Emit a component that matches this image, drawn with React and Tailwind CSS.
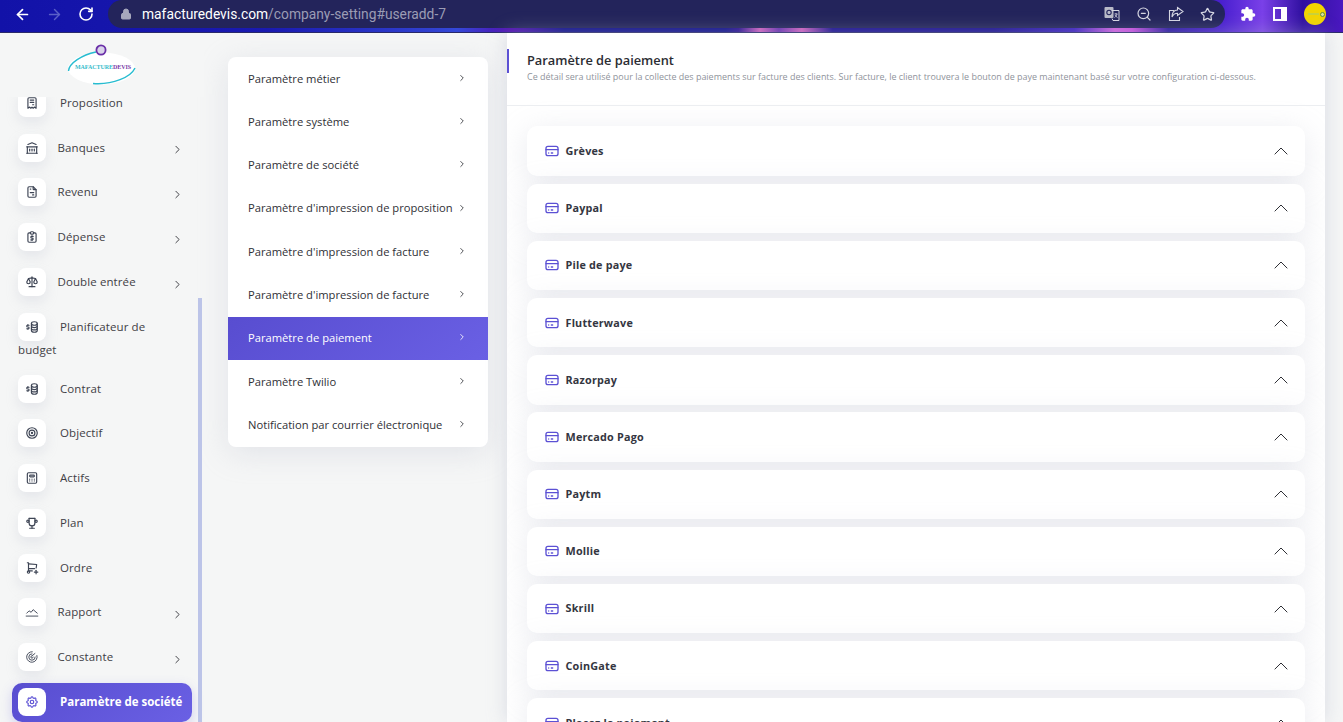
import React from "react";
import { ArrowLeft, ArrowRight, RotateCw, Lock, ZoomOut, Star, ChevronRight } from "lucide-react";
import {
  TbReceipt,
  TbBuildingBank,
  TbFileInvoice,
  TbReportMoney,
  TbScale,
  TbBusinessplan,
  TbTarget,
  TbCalculator,
  TbTrophy,
  TbShoppingCartPlus,
  TbSettings,
  TbCreditCard,
} from "react-icons/tb";
import { MdExtension } from "react-icons/md";

function ReportIcon(props) {
  return (
    <svg viewBox="0 0 24 24" fill="none" stroke="currentColor" strokeWidth="1.6" strokeLinecap="round" strokeLinejoin="round" {...props}>
      <path d="M2 19h20" />
      <path d="M3 14l4-4 3.5 2.5L14 8l7 6" />
    </svg>
  );
}

function ConstantIcon(props) {
  return (
    <svg viewBox="0 0 24 24" fill="none" stroke="currentColor" strokeWidth="1.6" strokeLinecap="round" {...props}>
      <path d="M20.5 9.5a9 9 0 1 1-8-6.5" />
      <path d="M17.5 12a5.5 5.5 0 1 1-5.5-5.5" />
      <path d="M14 12a2 2 0 1 1-2-2l5-4" />
    </svg>
  );
}

const sideItems = [
  { label: "Proposition", icon: TbReceipt },
  { label: "Banques", icon: TbBuildingBank, sub: true },
  { label: "Revenu", icon: TbFileInvoice, sub: true },
  { label: "Dépense", icon: TbReportMoney, sub: true },
  { label: "Double entrée", icon: TbScale, sub: true },
  { label: "Planificateur de budget", icon: TbBusinessplan },
  { label: "Contrat", icon: TbBusinessplan },
  { label: "Objectif", icon: TbTarget },
  { label: "Actifs", icon: TbCalculator },
  { label: "Plan", icon: TbTrophy },
  { label: "Ordre", icon: TbShoppingCartPlus },
  { label: "Rapport", icon: ReportIcon, sub: true },
  { label: "Constante", icon: ConstantIcon, sub: true },
];

const settingsMenu = [
  "Paramètre métier",
  "Paramètre système",
  "Paramètre de société",
  "Paramètre d'impression de proposition",
  "Paramètre d'impression de facture",
  "Paramètre d'impression de facture",
  "Paramètre de paiement",
  "Paramètre Twilio",
  "Notification par courrier électronique",
];

const gateways = [
  "Grèves",
  "Paypal",
  "Pile de paye",
  "Flutterwave",
  "Razorpay",
  "Mercado Pago",
  "Paytm",
  "Mollie",
  "Skrill",
  "CoinGate",
  "Placez le paiement",
];

function BrowserBar() {
  return (
    <div className="h-[33px] shrink-0 flex items-start border-b border-[#2a2a6a] bg-[linear-gradient(90deg,#1212a8_0%,#1a1ab0_20%,#3040d0_32%,#3448d8_34%,#5010b0_38%,#10108a_42%,#10108a_54%,#2a1090_55%,#d060c0_56.6%,#6a30b0_58%,#d060c0_59.7%,#1a1090_62%,#1a1090_74%,#3a20c0_80%,#d060e0_83%,#c850e0_84.3%,#2a18a0_87%,#4a20d0_91%,#7a40e8_94%,#3010a0_97%,#4a18c0_100%)]">
      <div className="w-[108px] h-[28px] flex items-center shrink-0 pl-[14px] gap-[15px] text-white">
        <ArrowLeft size={17} strokeWidth={2.4} />
        <ArrowRight size={17} strokeWidth={2} className="text-[#5a5fc8]" />
        <RotateCw size={16} strokeWidth={2.4} />
      </div>
      <div className="w-[1117px] h-[28px] rounded-full bg-[#23245b] flex items-center pl-[12px] pr-[10px] text-[13.8px] font-['Roboto',sans-serif]">
        <Lock size={12} fill="#a7a8bd" stroke="#a7a8bd" className="mr-[10px]" />
        <span className="text-white">mafacturedevis.com</span>
        <span className="text-[#9b9cb4]">/company-setting#useradd-7</span>
        <div className="ml-auto flex items-center gap-[16px] text-[#d5d6e2]">
          <svg viewBox="0 0 16 16" className="w-[16px] h-[16px]">
            <rect x="0.5" y="1" width="9" height="11" rx="1" fill="#b9bac8" />
            <path d="M8 4.5h7v10h-6l-1-2" fill="none" stroke="#d5d6e2" strokeWidth="1" />
            <circle cx="5" cy="6.5" r="2.2" fill="none" stroke="#23245b" strokeWidth="1.1" />
            <path d="M10.5 8h3M12 7v1M13 8c-.5 2-1.5 3-2.5 3.5M11 9c.5 1 1.5 2 2.5 2.5" stroke="#d5d6e2" strokeWidth=".8" fill="none" />
          </svg>
          <ZoomOut size={16} strokeWidth={1.8} />
          <svg viewBox="0 0 16 16" className="w-[16px] h-[16px]" fill="none" stroke="currentColor" strokeWidth="1.1">
            <path d="M6 4.5H1.5v10h10V11" />
            <path d="M9.5 1.5 15 5.5l-5.5 4V7.2C7 7.2 5.2 8.4 4 11c0-4 2.2-6.8 5.5-7z" />
          </svg>
          <Star size={15} strokeWidth={2} />
        </div>
      </div>
      <div className="flex-1 h-[28px] flex items-center pl-[15px] gap-[17px] text-white">
        <MdExtension size={16} />
        <div className="w-[14px] h-[14px] border-[2px] border-white flex justify-end">
          <div className="w-[4px] h-full bg-white" />
        </div>
        <div className="w-[22px] h-[22px] rounded-full bg-[#f2d500] flex items-center justify-end gap-[1px] pr-[1px]">
          <div className="w-[11px] h-[2px] bg-[#c9d23a]" />
          <div className="w-[5px] h-[5px] rounded-full border border-[#5f8f3a] bg-[#d8e0a0]" />
        </div>
      </div>
    </div>
  );
}

function SideItem({ item }) {
  const Icon = item.icon;
  return (
    <div className="relative pl-[18px] pr-[40px] py-[8.4px] text-[11.5px] leading-[16px] font-medium text-[#3f4045] tracking-[0.1px]">
      <span className="inline-flex w-[28px] h-[28px] mr-[14px] items-center justify-center align-middle bg-white rounded-[8px] shadow-[0_6px_12px_rgba(182,186,203,0.25)] text-[#3e4555]">
        <Icon className="w-[14px] h-[14px]" />
      </span>
      <span className={item.sub ? "-ml-[2.5px] align-middle" : "align-middle"}>{item.label}</span>
      {item.sub && (
        <ChevronRight size={13} strokeWidth={1.8} className="absolute left-[171px] top-[18px] text-[#3f4045]" />
      )}
    </div>
  );
}

function Sidebar() {
  return (
    <aside className="relative w-[204px] shrink-0 h-full flex flex-col overflow-hidden">
      <div className="h-[64px] shrink-0 relative z-10 bg-[#f5f6f6] flex justify-start pl-[67px] pt-[10px]">
        <svg viewBox="0 0 70 44" className="w-[70px] h-[44px]">
          <ellipse cx="34.5" cy="25.5" rx="33.5" ry="16" fill="#ffffff" />
          <path d="M1.5 28C2 20 15 12 29 9" fill="none" stroke="#27bcd0" strokeWidth="1.4" />
          <path d="M68 25C64 34 46 42 26 40.5" fill="none" stroke="#27bcd0" strokeWidth="1.4" />
          <circle cx="34" cy="7" r="4.6" fill="#d9d3ea" stroke="#6a2fa8" strokeWidth="1.8" />
          <text x="8" y="26" fontSize="6" fontWeight="700" textLength="56" fontFamily="Liberation Serif, serif" fill="#35bccb">
            MAFACTURE<tspan fill="#7a3aa8">DEVIS</tspan>
          </text>
        </svg>
      </div>
      <div className="flex-1 min-h-0 -mt-[16.5px] overflow-hidden">
        {sideItems.map((item) => (
          <SideItem key={item.label} item={item} />
        ))}
        <div className="ml-[12px] w-[180px] h-[39px] mt-[3px] pl-[6px] flex items-center rounded-[10px] bg-[linear-gradient(141deg,#584dd0,#6a60e4)] text-white text-[11.5px] font-bold shadow-[0_4px_12px_rgba(100,90,220,0.25)]">
          <span className="w-[28px] h-[28px] mr-[14px] flex items-center justify-center bg-white rounded-[8px] text-[#5c51d4]">
            <TbSettings className="w-[14px] h-[14px]" />
          </span>
          Paramètre de société
        </div>
      </div>
      {/* scrollbar thumb */}
      <div className="absolute left-[198px] top-[265px] bottom-0 w-[4px] bg-[#bcc4e8]" />
    </aside>
  );
}

function SettingsMenu() {
  return (
    <div className="w-[303px] shrink-0 pt-[24px] pl-[24px]">
      <div className="w-[260px] bg-white rounded-[8px] overflow-hidden shadow-[0_6px_30px_rgba(182,186,203,0.3)]">
        {settingsMenu.map((label, i) => {
          const active = label === "Paramètre de paiement";
          return (
            <div
              key={i}
              className={
                active
                  ? "h-[43.3px] pl-[20px] pr-[21px] flex items-center justify-between text-[11.2px] font-medium text-white bg-[linear-gradient(141deg,#584dd0,#6a60e4)]"
                  : "h-[43.3px] pl-[20px] pr-[21px] flex items-center justify-between text-[11.2px] font-medium text-[#2f3036]"
              }
            >
              <span className="mt-[0.6px]">{label}</span>
              <ChevronRight size={10} strokeWidth={2} className="-mt-[2px]" />
            </div>
          );
        })}
      </div>
    </div>
  );
}

function GatewayCard({ name }) {
  return (
    <div className="h-[49.4px] shrink-0 px-[17px] flex items-center bg-white rounded-[10px] shadow-[0_6px_30px_rgba(182,186,203,0.3)]">
      <TbCreditCard className="w-[16px] h-[16px] text-[#5c51d4] -ml-[0.5px] mr-[6px]" />
      <span className="text-[10.8px] font-bold text-[#343641] tracking-[0.2px]">{name}</span>
      <svg viewBox="0 0 14 8" className="ml-auto w-[14px] h-[8px]" fill="none" stroke="#2f3036" strokeWidth="1">
        <path d="M.7 7.3 7 1l6.3 6.3" />
      </svg>
    </div>
  );
}

function PaymentPanel() {
  return (
    <main className="w-[818px] shrink-0 h-full overflow-hidden bg-white shadow-[0_0_18px_rgba(182,186,203,0.45)]">
      <div className="relative h-[73px] border-b border-[#eceef1] pl-[20px] pt-[17px]">
        <div className="absolute left-0 top-[16px] w-[2px] h-[24px] bg-[#5c51d4]" />
        <h1 className="text-[12.8px] leading-[20px] font-semibold text-[#2b2c32]">Paramètre de paiement</h1>
        <p className="text-[8.96px] leading-[12px] mt-[1px] text-[#8f939b]">
          Ce détail sera utilisé pour la collecte des paiements sur facture des clients. Sur facture, le client trouvera le bouton de paye maintenant basé sur votre configuration ci-dessous.
        </p>
      </div>
      <div className="flex flex-col gap-[7.8px] px-[20px] pt-[20.4px]">
        {gateways.map((name) => (
          <GatewayCard key={name} name={name} />
        ))}
      </div>
    </main>
  );
}

export default function App() {
  return (
    <div className="w-[1343px] h-[722px] overflow-hidden flex flex-col bg-[#f5f6f6] font-['Open_Sans',sans-serif]">
      <BrowserBar />
      <div className="flex-1 min-h-0 flex">
        <Sidebar />
        <SettingsMenu />
        <PaymentPanel />
      </div>
    </div>
  );
}
